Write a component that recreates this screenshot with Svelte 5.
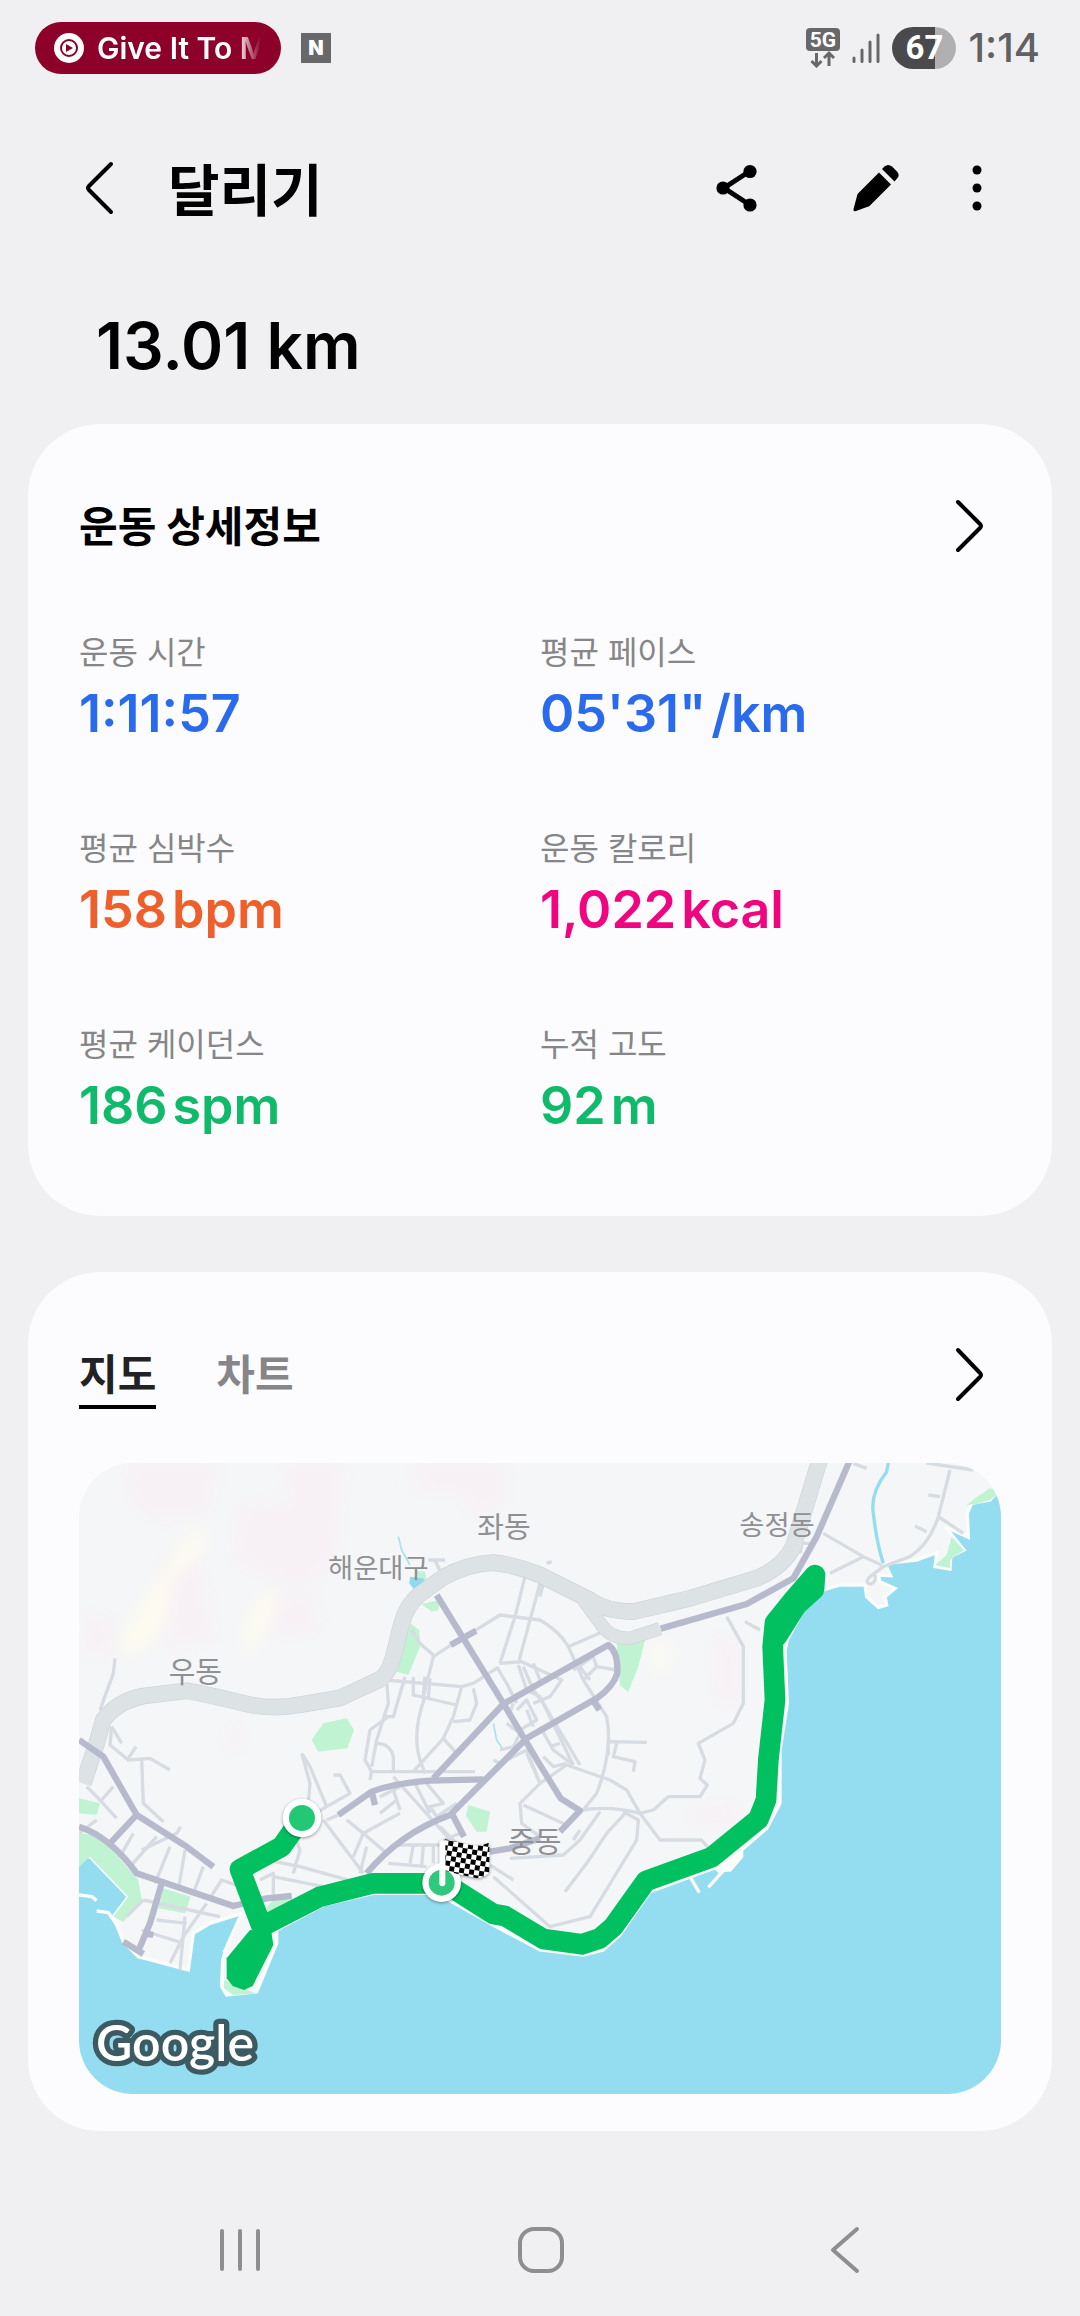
<script>
	const stats = [
		{ label: "운동 시간", value: "1:11:57", unit: "", tone: "blue" },
		{ label: "평균 페이스", value: "05'31\"", unit: "/km", tone: "blue" },
		{ label: "평균 심박수", value: "158", unit: "bpm", tone: "orange" },
		{ label: "운동 칼로리", value: "1,022", unit: "kcal", tone: "pink" },
		{ label: "평균 케이던스", value: "186", unit: "spm", tone: "green" },
		{ label: "누적 고도", value: "92", unit: "m", tone: "green" },
	]

	const tabs = [
		{ id: "map", label: "지도" },
		{ id: "chart", label: "차트" },
	]

	let activeTab = $state("map")

	const places = [
		{ name: "좌동", x: 1252, y: 264 },
		{ name: "해운대구", x: 804, y: 384, small: true },
		{ name: "우동", x: 326, y: 700 },
		{ name: "송정동", x: 2038, y: 256, small: true },
		{ name: "중동", x: 1344, y: 1210 },
	]

	const hills = [
		"M210 39L480 39L440 190L300 210L210 160Z",
		"M670 39L850 39L830 330L720 420L520 330L540 170L690 160Z",
		"M1070 39L1340 39L1330 160L1240 200L1210 130L1060 120Z",
		"M70 500L150 500L170 600L80 620Z",
		"M300 330L420 330L460 560L330 600Z",
		"M650 430L760 440L780 540L640 560Z",
		"M1960 570L2040 560L2040 750L1970 760Z",
		"M1890 1080L2030 1060L2030 1120L1890 1120Z",
		"M495 840L545 830L540 900L500 900Z",
	]

	const ridges = [
		"M440 240L400 250L340 330L270 440L190 560L200 610L250 590L320 500L330 400L420 300Z",
		"M660 430L620 430L570 500L550 620L600 560Z",
		"M1785 580L1825 580L1820 660L1785 660Z",
	]

	const parks = [
		"M790 820L860 805L882 840L862 895L775 905L755 870Z",
		"M1050 520L1078 540L1080 590L1045 675L1010 665Z",
		"M1085 462L1140 450L1135 480L1115 485Z",
		"M1070 362L1095 365L1102 400L1080 410Z",
		"M1670 580L1755 570L1735 650L1704 726L1680 705Z",
		"M1225 1065L1290 1085L1280 1145L1250 1145L1218 1098Z",
		"M57 1150L110 1155L170 1215L235 1290L245 1350L190 1415L160 1400L205 1340L90 1220L57 1250Z",
		"M57 1045L120 1060L110 1095L57 1090Z",
		"M310 1315L392 1340L375 1390L295 1375Z",
		"M600 1395L640 1350L690 1350L710 1360L640 1395Z",
		"M2720 165L2745 145L2790 115L2823 125L2790 150L2750 162Z",
		"M2675 260L2712 300L2670 330L2670 355L2625 345L2660 315Z",
		"M492 1590L560 1620L590 1630L520 1635L492 1615Z",
	]

	const railway =
		"M70 1000L110 880L130 810Q170 755 250 738L380 722Q450 735 560 762Q640 780 720 764L840 744L960 688Q990 668 1005 600L1025 520Q1040 465 1080 432L1150 382Q1220 342 1300 338Q1370 345 1440 375L1590 450Q1640 485 1720 485L1890 445L2090 385Q2170 350 2200 290L2282 20"
	const railBranch = "M1570 450L1625 525Q1650 565 1710 565L1800 536"

	const mainRoads = [
		"M1130 435L1330 760L1440 945L1502 1045L1560 1082L1500 1145",
		"M1120 985L1330 762L1440 700L1645 585Q1675 605 1672 670Q1660 710 1610 745L1400 865L1170 1095Q1020 1150 920 1270",
		"M835 1095L935 1025Q1000 1000 1110 992L1270 988",
		"M935 1025L945 1065",
		"M1175 1090L1212 1160",
		"M1172 585L1248 542",
		"M1600 752L1618 780",
		"M1290 1205L1350 1195L1440 1165",
		"M57 870L130 920L230 1095L380 1190L460 1250",
		"M225 1100L150 1180",
		"M57 1130Q150 1160 230 1270L520 1368L620 1345L695 1338",
		"M305 1300L270 1420L232 1510",
		"M190 1475L250 1512",
		"M255 1450L280 1455",
		"M1802 536L2060 462L2200 385L2270 260L2370 30",
	]

	const streets = [
		// west side
		"M165 625L160 670L120 780",
		"M155 830L150 885L205 930L270 925L330 960",
		"M155 830L185 880M205 925L228 890M245 930L250 1060L310 1115",
		"M80 1010L120 1050L170 1105M110 1110L57 1150M125 1050L160 1010",
		"M180 1220L220 1150M210 1250L290 1160M245 1200L350 1150L362 1130",
		"M285 1300L330 1190M355 1320L375 1200M400 1330L430 1250M450 1345L485 1290L600 1330",
		"M200 1400L250 1350M250 1350L480 1400M245 1440L370 1480M375 1400L360 1560M330 1540L370 1460L440 1360M290 1410L380 1420",
		// centre west
		"M725 910L750 950L800 1070L750 1100M725 910L750 1000L745 1060M820 975L840 975L870 1030L800 1070",
		"M790 1110L910 1270M800 1110L835 1095M860 1110L910 1150L880 1220M910 1150L1020 1090M910 1150L980 1210M960 1090L1010 1050M960 1040L1020 1010M1000 1020L1020 1080",
		"M700 1150L720 1200L700 1270M620 1230L720 1250L900 1300M600 1290L640 1270L640 1340M640 1280L790 1310M900 1270L920 1190M1000 1185L1150 1185M985 1240L1100 1250M1060 1185L1050 1240M1090 1185L1085 1250M1120 1185L1120 1240",
		"M1000 980L1180 1180M1060 990L1110 1090M1100 1000L1150 1060L1110 1070L1130 1100L1190 1060M1200 1150L1150 1170M1140 1130L1190 1180",
		"M980 690L985 760L950 870L935 950M1035 680L1000 800L970 800M985 800L930 840L915 930L935 965L1245 965M950 880Q990 880 1000 920L1000 960M1070 965L1060 960M930 990L935 960",
		"M975 690L1205 710M1060 680L1060 735L1190 765M1095 680L1090 740M1110 685L1105 745",
		"M1055 540L1080 580L1125 620M1060 965L1150 865L1180 800L1205 710L1240 700L1310 655M1240 715L1250 760L1230 810L1180 815M1150 865L1190 910",
		"M1095 740Q1055 850 1080 930L1095 970M1090 740L1120 620L1180 580M1240 545L1320 495L1440 510Q1500 545 1525 590L1570 690L1640 800Q1660 900 1610 1030L1570 1080",
		"M1395 380L1365 500L1320 640M1440 400L1410 510L1375 640M1320 640L1385 635L1505 690L1470 740L1420 760M1105 330L1155 330M1125 330L1150 385",
		// city centre
		"M1310 650L1340 700L1370 760M1375 645L1400 720L1440 740L1540 945M1390 650L1420 720L1450 760L1560 945M1420 640L1440 690",
		"M1370 780L1400 750L1430 810L1380 840M1400 780L1420 830M1340 820L1380 850L1360 890L1320 900M1360 760L1345 800M1440 830L1480 900L1540 945",
		"M1300 930L1320 940L1400 900L1440 1000L1380 1060L1385 1120L1440 1160M1390 1065L1520 1125M1440 1000L1400 910M1440 1000L1520 945L1650 990L1700 1020L1740 1090",
		"M1450 920L1480 950L1520 940M1470 890L1500 880",
		"M1525 590L1640 540M1540 660L1600 620L1610 650L1570 690M1610 650L1670 660M1560 650L1590 690",
		"M1645 875L1760 877M1670 880L1660 920L1725 935L1720 965M1645 875L1645 915",
		"M1460 340L1475 335M1440 440L1455 380",
		// cape
		"M1560 1082Q1640 1065 1740 1090L1780 1080L1825 1040L1920 1040L1942 1005L1920 985L1935 930L1915 880L2020 820L2050 760L2050 590L2000 500",
		"M1740 1090L1800 1170L1925 1170L1950 1200M1690 1085L1735 1110L1730 1170L1590 1400L1470 1430L1300 1280",
		"M1700 1085L1640 1150L1580 1240L1515 1325M1620 1085L1560 1170L1510 1215L1350 1225M1560 1140L1540 1170M1290 1245L1360 1290",
		// Songjeong
		"M2055 515L2100 540M2290 250L2410 320L2465 345M2410 320L2310 370M2430 380L2470 350L2550 320Q2610 280 2635 200L2670 60M2605 135L2640 140M2565 228L2600 245M2635 200L2710 250M2380 40L2420 55M2600 39L2740 60M2220 310L2225 280L2250 280",
		"M2430 380Q2412 400 2432 402Q2450 395 2445 375",
	]

	// runs past the frame on three sides so that only the coast gets a shoreline
	const sea =
		"M20 1230L57 1225L90 1220L205 1340L160 1400L190 1475L235 1520L385 1560L400 1450L450 1420L545 1390L500 1490L488 1530L485 1610L500 1635L590 1625L650 1480L650 1440L790 1365L940 1330L1130 1330L1290 1420L1440 1500L1570 1515L1630 1500L1680 1455L1770 1325L1960 1255L2010 1260L2045 1220L2045 1200L2120 1135L2160 1060L2160 900L2182 760L2175 600L2182 570L2230 480L2290 420L2340 405L2415 405L2420 440L2455 472L2480 465L2475 440L2505 415L2460 395L2455 375L2492 377L2475 340L2570 330L2630 308L2625 350L2670 357L2672 320L2712 300L2655 230L2725 262L2722 190L2735 160L2790 150L2823 115L2880 90L2880 1980L20 1980Z"

	const route =
		"M700 1140L665 1190L540 1258L605 1430L780 1340L940 1300L1145 1300L1190 1322L1300 1392L1335 1398L1450 1467L1565 1483L1620 1465L1660 1430L1758 1293L1955 1222L2095 1108L2118 1050L2125 930L2145 750L2138 590L2145 518L2200 450L2265 375L2262 418L2210 465L2150 560"
	const routeLoop = "M570 1440L500 1525L500 1585L518 1608L552 1620L578 1608L640 1485L634 1445Z"
</script>

<div class="screen">
	<div class="status-bar">
		<div class="now-playing">
			<svg width="30" height="30" viewBox="0 0 30 30" aria-hidden="true">
				<circle cx="15" cy="15" r="15" fill="#fff" />
				<circle cx="15" cy="15" r="8" fill="none" stroke="#8c0029" stroke-width="2" />
				<path d="M12 11L19 15L12 19Z" fill="#8c0029" />
			</svg>
			<span class="song">Give It To M</span>
		</div>
		<span class="app-badge">N</span>

		<div class="status-icons">
			<svg class="network" width="34" height="40" viewBox="0 0 34 40" aria-label="5G">
				<rect width="34" height="23" rx="4" fill="#68686a" />
				<text x="17" y="19" text-anchor="middle">5G</text>
				<path
					d="M10.500 25V38M5.500 33L10.500 38L15.500 33M23 38V25M18 30L23 25L28 30"
					fill="none"
					stroke="#68686a"
					stroke-width="3"
				/>
			</svg>
			<svg width="28" height="30" viewBox="0 0 28 30" aria-hidden="true">
				<path
					d="M2 25V28.500M10 17V28.500M18 9V28.500M26 2V28.500"
					stroke="#68686a"
					stroke-width="3"
					stroke-linecap="round"
				/>
			</svg>
			<span class="battery">67</span>
			<span class="clock">1:14</span>
		</div>
	</div>

	<header class="app-bar">
		<button class="icon-button" aria-label="뒤로">
			<svg width="60" height="60" viewBox="0 0 60 60">
				<path class="chevron" d="M39 7L17 29Q15 31 17 33L39 55" />
			</svg>
		</button>
		<h1>달리기</h1>
		<div class="actions">
			<button class="icon-button wide" aria-label="공유">
				<svg width="60" height="60" viewBox="0 0 60 60">
					<path d="M43 14L17 31L43 48" fill="none" stroke="#000" stroke-width="5" />
					<circle cx="16" cy="31" r="6.600" />
					<circle cx="43" cy="14.500" r="6.600" />
					<circle cx="43" cy="48" r="6.600" />
				</svg>
			</button>
			<button class="icon-button wide" aria-label="편집">
				<svg width="60" height="60" viewBox="0 0 60 60">
					<path
						d="M32 15.500L44 27.500L23 48.500Q22 49.500 20 50L9 54Q6 55 6.500 52L10 39Q10 37.500 11 36.500Z"
					/>
					<path d="M35 12L37.500 9.500Q41 6.500 45 9.500L50 14.500Q53 18 50.500 21L47.500 24.500Z" />
				</svg>
			</button>
			<button class="icon-button" aria-label="더보기">
				<svg width="60" height="60" viewBox="0 0 60 60">
					<circle cx="30" cy="13" r="4.500" />
					<circle cx="30" cy="31" r="4.500" />
					<circle cx="30" cy="49" r="4.500" />
				</svg>
			</button>
		</div>
	</header>

	<p class="distance">13.01 km</p>

	<main>
		<section class="card details">
			<div class="card-head">
				<h2>운동 상세정보</h2>
				<button class="icon-button" aria-label="운동 상세정보 열기">
					<svg width="60" height="60" viewBox="0 0 60 60">
						<path class="chevron" d="M17 5L39 27Q41 29 39 31L17 53" />
					</svg>
				</button>
			</div>
			<dl class="stats">
				{#each stats as stat}
					<div class="stat">
						<dt>{stat.label}</dt>
						<dd class={stat.tone}>
							<span>{stat.value}</span>
							{#if stat.unit}<span>{stat.unit}</span>{/if}
						</dd>
					</div>
				{/each}
			</dl>
		</section>

		<section class="card route">
			<div class="card-head">
				<div class="tabs" role="tablist">
					{#each tabs as tab}
						<button
							role="tab"
							class="tab"
							class:active={activeTab === tab.id}
							aria-selected={activeTab === tab.id}
							onclick={() => (activeTab = tab.id)}
						>
							{tab.label}
						</button>
					{/each}
				</div>
				<button class="icon-button" aria-label="지도 열기">
					<svg width="60" height="60" viewBox="0 0 60 60">
						<path class="chevron" d="M17 5L39 28Q41 30 39 32L17 54" />
					</svg>
				</button>
			</div>

			<svg class="map" viewBox="57 39 2766 1893" aria-label="운동 경로 지도">
				<defs>
					<pattern
						id="checks"
						width="30"
						height="30"
						patternUnits="userSpaceOnUse"
						patternTransform="rotate(9)"
					>
						<rect width="30" height="30" fill="#fff" />
						<rect width="15" height="15" fill="#000" />
						<rect x="15" y="15" width="15" height="15" fill="#000" />
					</pattern>
					<filter id="soft" x="-20%" y="-20%" width="140%" height="140%">
						<feGaussianBlur stdDeviation="22" />
					</filter>
				</defs>

				<rect x="57" y="39" width="2766" height="1893" fill="#f5f6f7" />
				<g filter="url(#soft)">
					{#each hills as d}<path {d} fill="#f7f1f5" />{/each}
					{#each ridges as d}<path {d} fill="#fefcee" />{/each}
				</g>
				<path d={sea} fill="#94dcf0" stroke="#fbfcfc" stroke-width="10" />
				{#each parks as d}<path {d} fill="#c0f3d1" />{/each}

				<!-- ponds, streams and breakwaters -->
				<path d="M1050 380L1090 385L1100 412L1070 428L1048 400Z" fill="#8fdaf0" />
				<path
					d="M1015 260L1025 300L1050 345M1300 820L1310 870L1330 900"
					fill="none"
					stroke="#a8e3ea"
					stroke-width="5"
				/>
				<path
					d="M2485 39L2480 65Q2430 130 2440 190Q2450 280 2470 340"
					fill="none"
					stroke="#94dcf0"
					stroke-width="10"
				/>
				<path
					d="M57 1335L95 1340L110 1352M110 1383L145 1388L175 1430M1890 1280L1918 1328M1945 1312L1990 1262M490 1500L520 1530"
					fill="none"
					stroke="#fbfcfc"
					stroke-width="10"
				/>
				<path d="M1960 1250L2045 1200L2045 1225L2015 1262L1975 1270Z" fill="#fbfcfc" />

				<g class="streets">
					{#each streets as d}<path {d} />{/each}
				</g>
				<g class="railway">
					<path d={railBranch} stroke="#cdd4da" stroke-width="40" />
					<path d={railway} stroke="#cdd4da" stroke-width="50" />
					<path d={railBranch} stroke="#dde2e5" stroke-width="36" />
					<path d={railway} stroke="#dde2e5" stroke-width="46" />
				</g>
				<g class="main-roads">
					{#each mainRoads as d}<path {d} />{/each}
				</g>

				{#each places as place}
					<text class="place" class:small={place.small} x={place.x} y={place.y}>{place.name}</text>
				{/each}

				<path class="run" d={route} />
				<path d={routeLoop} fill="#00c060" />

				<g class="marker">
					<circle cx="726" cy="1104" r="58" fill="#fff" />
					<circle cx="726" cy="1104" r="39" fill="#22c874" />
					<circle cx="1145" cy="1298" r="58" fill="#fff" />
					<circle cx="1145" cy="1298" r="39" fill="#30c87c" />
					<path
						d="M1155 1168Q1190 1175 1220 1183Q1255 1192 1288 1178L1288 1268Q1270 1285 1250 1284Q1200 1275 1156 1262Z"
						fill="url(#checks)"
					/>
					<path d="M1147 1180V1300" stroke="#fff" stroke-width="18" stroke-linecap="round" />
				</g>

				<text class="google" x="108" y="1833">Google</text>
			</svg>
		</section>
	</main>

	<nav class="system-nav">
		<button class="icon-button" aria-label="최근 앱">
			<svg width="60" height="60" viewBox="0 0 60 60">
				<path d="M12 11V49M30 11V49M48 11V49" />
			</svg>
		</button>
		<button class="icon-button" aria-label="홈">
			<svg width="60" height="60" viewBox="0 0 60 60">
				<rect x="10" y="9" width="42" height="42" rx="14" />
			</svg>
		</button>
		<button class="icon-button" aria-label="뒤로">
			<svg width="60" height="60" viewBox="0 0 60 60">
				<path d="M47 9L23 30L47 51" />
			</svg>
		</button>
	</nav>
</div>

<style>
	:global(body) {
		background: #f0f0f2;
	}

	.screen {
		font-family: "Inter", "Noto Sans CJK KR", sans-serif;
		color: #000;
		min-height: 100vh;
		background: #f0f0f2;
	}

	button {
		border: 0;
		padding: 0;
		background: none;
		color: inherit;
		font: inherit;
		cursor: pointer;
	}

	svg {
		display: block;
	}

	h1,
	h2,
	p,
	dl,
	dd {
		margin: 0;
	}

	.status-bar {
		display: flex;
		align-items: center;
		gap: 20px;
		height: 96px;
		padding: 0 40px 0 35px;
		box-sizing: border-box;
	}

	.now-playing {
		display: flex;
		align-items: center;
		gap: 13px;
		width: 246px;
		height: 52px;
		padding: 0 4px 0 19px;
		box-sizing: border-box;
		border-radius: 26px;
		background: #8c0029;
		color: #fff;
	}

	.song {
		flex: 1;
		white-space: nowrap;
		font-size: 30px;
		font-weight: 600;
		line-height: 40px;
		mask-image: linear-gradient(to right, #000 78%, transparent 91%);
	}

	.app-badge {
		width: 30px;
		background: #68686a;
		color: #fff;
		font-size: 20px;
		font-weight: 900;
		line-height: 30px;
		text-align: center;
	}

	.status-icons {
		display: flex;
		align-items: center;
		gap: 12px;
		margin-left: auto;
	}

	.network text {
		fill: #fff;
		font-family: "Roboto", sans-serif;
		font-size: 21px;
		font-weight: 700;
	}

	.battery {
		width: 64px;
		border-radius: 21px;
		background: linear-gradient(to right, #4a4a4c 67%, #b0b0b2 67%);
		color: #fff;
		font-family: "Roboto", sans-serif;
		font-size: 33px;
		font-weight: 700;
		line-height: 42px;
		text-align: center;
	}

	.clock {
		color: #616163;
		font-size: 40px;
		font-weight: 500;
		line-height: 42px;
	}

	.app-bar {
		display: flex;
		align-items: center;
		height: 182px;
		padding: 0 73px 0 72px;
	}

	h1 {
		margin-left: 36px;
		font-family: "Noto Sans CJK KR", sans-serif;
		font-size: 56px;
		font-weight: 700;
		line-height: 80px;
	}

	.actions {
		display: flex;
		margin-left: auto;
	}

	.icon-button {
		display: flex;
		align-items: center;
		justify-content: center;
		width: 60px;
		height: 60px;
	}

	.icon-button.wide {
		width: 140px;
	}

	.chevron {
		fill: none;
		stroke: #000;
		stroke-width: 4;
		stroke-linecap: round;
	}

	.distance {
		padding: 28px 96px 38px;
		font-size: 64px;
		font-weight: 600;
		line-height: 80px;
	}

	main {
		display: flex;
		flex-direction: column;
		gap: 56px;
		padding: 0 28px;
	}

	.card {
		padding: 73px 51px 37px;
		border-radius: 72px;
		background: #fcfcfe;
	}

	.card.details {
		padding-bottom: 77px;
	}

	.card-head {
		display: flex;
		align-items: flex-start;
		justify-content: space-between;
	}

	h2,
	.tab {
		font-size: 42px;
		font-weight: 700;
		line-height: 60px;
	}

	.stats {
		display: grid;
		grid-template-columns: 1fr 1fr;
		row-gap: 80px;
		margin-top: 74px;
	}

	dt {
		margin-bottom: 6px;
		color: #868688;
		font-size: 32px;
		line-height: 44px;
	}

	dd {
		display: flex;
		gap: 5px;
		font-size: 52px;
		font-weight: 600;
		line-height: 66px;
	}

	.blue {
		color: #2a6aec;
	}

	.orange {
		color: #ee5f2b;
	}

	.pink {
		color: #f0047f;
	}

	.green {
		color: #0fba6a;
	}

	.tabs {
		display: flex;
		gap: 60px;
	}

	.tab {
		border-bottom: 4px solid transparent;
		color: #868688;
	}

	.tab.active {
		border-color: #000;
		color: #222224;
	}

	.map {
		width: 100%;
		margin-top: 54px;
		border-radius: 54px;
	}

	.streets path {
		fill: none;
		stroke: #d7dbe2;
		stroke-width: 10;
		stroke-linejoin: round;
	}

	.railway path {
		fill: none;
		stroke-linejoin: round;
	}

	.main-roads path {
		fill: none;
		stroke: #b7b9cd;
		stroke-width: 19;
		stroke-linejoin: round;
	}

	.place {
		fill: #8e9093;
		font-size: 87px;
	}

	.place.small {
		font-size: 82px;
	}

	.run {
		fill: none;
		stroke: #00c060;
		stroke-width: 62;
		stroke-linejoin: round;
		stroke-linecap: round;
	}

	.marker {
		filter: drop-shadow(0 3px 4px rgba(0, 0, 0, 0.4));
	}

	.google {
		fill: #fff;
		stroke: #3c5a62;
		stroke-width: 32;
		stroke-linejoin: round;
		paint-order: stroke;
		font-family: "Lato", sans-serif;
		font-size: 150px;
		font-weight: 600;
	}

	.system-nav {
		display: grid;
		grid-template-columns: repeat(3, 1fr);
		justify-items: center;
		padding: 89px 90px 36px;
	}

	.system-nav svg {
		fill: none;
		stroke: #8e8e90;
		stroke-width: 4;
		stroke-linecap: round;
		stroke-linejoin: round;
	}
</style>
